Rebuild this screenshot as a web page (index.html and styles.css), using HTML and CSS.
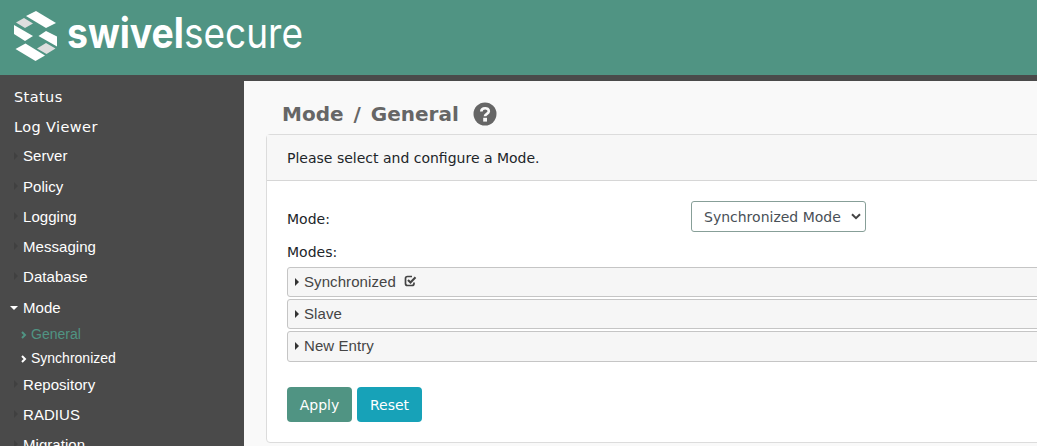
FILE: index.html
```html
<!DOCTYPE html>
<html lang="en">
<head>
<meta charset="utf-8">
<title>Swivel Secure - Mode / General</title>
<link rel="stylesheet" href="styles.css">
</head>
<body>
<header class="topbar">
  <svg class="logo" width="310" height="75" viewBox="0 0 310 75" role="img" aria-label="swivelsecure">
    <g fill="#fff">
      <path d="M36 11 56 23 46 28 26 16Z"/>
      <path d="M14 25 33 36 25 41 14 34Z"/>
      <path d="M46 31 57 36.5V46.5L38.500 36Z"/>
      <path d="M25.500 43.500 45 55.500 35.500 61 15.500 49Z"/>
    </g>
    <path fill="#dedede" d="M24 18 33 23.500 25 28 16 22.500Z M46 43 55.500 48.500 46.500 54 37 48.500Z"/>
    <text class="logo-bold" x="67" y="47.500" textLength="117" lengthAdjust="spacingAndGlyphs">swivel</text>
    <text class="logo-light" x="184" y="47.500" textLength="119" lengthAdjust="spacingAndGlyphs">secure</text>
  </svg>
</header>
<div class="layout">
  <nav class="sidebar">
    <a class="item top">Status</a>
    <a class="item top">Log Viewer</a>
    <a class="item first"><i class="caret"></i>Server</a>
    <a class="item"><i class="caret"></i>Policy</a>
    <a class="item"><i class="caret"></i>Logging</a>
    <a class="item"><i class="caret"></i>Messaging</a>
    <a class="item"><i class="caret"></i>Database</a>
    <a class="item mode"><i class="caret open"></i>Mode</a>
    <a class="sub active"><svg class="chev" viewBox="0 0 6 8"><path d="M1 1 4 4 1 7"/></svg>General</a>
    <a class="sub"><svg class="chev" viewBox="0 0 6 8"><path d="M1 1 4 4 1 7"/></svg>Synchronized</a>
    <a class="item after"><i class="caret"></i>Repository</a>
    <a class="item"><i class="caret"></i>RADIUS</a>
    <a class="item"><i class="caret"></i>Migration</a>
  </nav>
  <main class="content">
    <h1 class="title"><span>Mode / General</span>
      <svg class="help" viewBox="0 0 24 24"><circle cx="12" cy="12" r="11.500" fill="#666"/><path d="M8.300 9.500C8.500 5.300 15.800 5.100 15.800 9.200 15.800 11.800 12 11.800 12 14.300" fill="none" stroke="#f9f9f9" stroke-width="2.700"/><path d="M10.200 15.800h3.800v3.800h-3.800z" fill="#f9f9f9"/></svg>
    </h1>
    <section class="card">
      <div class="card-head"><span>Please select and configure a Mode.</span></div>
      <div class="card-body">
        <div class="field">
          <label class="label">Mode:</label>
          <div class="select"><span>Synchronized Mode</span><svg class="down" viewBox="0 0 10 7"><path d="M1 1.200 5 5.200 9 1.200"/></svg></div>
        </div>
        <div class="label modes">Modes:</div>
        <div class="entry"><i class="tri"></i>Synchronized
          <svg class="check" viewBox="0 0 13 12"><path d="M8 1.500H3.500Q1.500 1.500 1.500 3.500V8.500Q1.500 10.500 3.500 10.500H8Q10 10.500 10 8.500V7.500" stroke-width="1.700"/><path d="M4 5 6.500 7.500 11.500 2.300" stroke-width="2.100"/></svg>
        </div>
        <div class="entry"><i class="tri"></i>Slave</div>
        <div class="entry last"><i class="tri"></i>New Entry</div>
        <div class="buttons"><button class="btn apply">Apply</button><button class="btn reset">Reset</button></div>
      </div>
    </section>
  </main>
</div>
</body>
</html>
```
FILE: styles.css
```css
* { box-sizing: border-box; }
body {
  margin: 0;
  height: 446px;
  overflow: hidden;
  background: #4a4a4a;
  font-family: Verdana, "DejaVu Sans", sans-serif;
  font-size: 14px;
  color: #212529;
}
.topbar { height: 75px; background: #509483; }
.logo { display: block; }
.logo text { font-family: Inter, sans-serif; font-size: 42px; fill: #fff; }
.logo .logo-bold { font-weight: 700; }
.logo .logo-light { font-weight: 400; }

.layout { display: flex; height: 371px; }
.sidebar { width: 244px; flex: none; padding: 7px 0 0 14px; overflow: hidden; }
.item, .sub {
  display: flex;
  align-items: center;
  color: #fff;
  font-family: Arial, "Liberation Sans", sans-serif;
}
.item { height: 30px; font-size: 15px; letter-spacing: 0.05px; }
.item.top { height: 30px; font-family: Verdana, "DejaVu Sans", sans-serif; font-size: 14.500px; letter-spacing: 0.400px; }
.item.first { height: 29px; padding-bottom: 2px; }
.sub { height: 24px; padding-left: 7px; font-size: 14px; }
.item.mode { height: 31px; padding-top: 2px; }
.item.after { height: 29px; padding-bottom: 1px; }
.sub.active { color: #509483; }
.caret {
  width: 4px;
  height: 8px;
  margin-right: 5px;
  border: 4px solid transparent;
  border-left-color: #404040;
  border-right: 0;
}
.caret.open {
  width: 8px;
  height: 4px;
  margin: 0 5px 0 -4px;
  border: 4px solid transparent;
  border-top-color: #fff;
  border-bottom: 0;
}
.chev { width: 6px; height: 8px; margin: 2px 4px 0 0; fill: none; stroke: currentColor; stroke-width: 2; }

.content {
  flex: none;
  width: 840px;
  margin-top: 6px;
  padding: 16px 22px 0;
  background: #f9f9f9;
}
.title {
  display: flex;
  align-items: center;
  gap: 14px;
  height: 34px;
  margin: 0 0 3px;
  padding-left: 16px;
  color: #666;
  font-size: 20px;
  font-weight: 700;
  letter-spacing: 0;
  word-spacing: 3px;
}
.help { width: 24px; height: 24px; }
.card { height: 309px; border: 1px solid #dcdcdc; border-radius: 4px; background: #fff; }
.card-head {
  display: flex;
  align-items: center;
  height: 46px;
  padding-left: 20px;
  border-bottom: 1px solid #d6d6d6;
  background: #f7f7f7;
}
.card-body { padding: 20px 20px 0; }
.field { display: flex; height: 31px; }
.label { width: 404px; padding-top: 9px; line-height: 18px; }
.select {
  display: flex;
  align-items: center;
  justify-content: space-between;
  width: 175px;
  height: 31px;
  padding: 0 4px 0 12px;
  border: 1px solid #879f98;
  border-radius: 3px;
  color: #495057;
}
.down { width: 10px; height: 7px; fill: none; stroke: #444; stroke-width: 2; }
.modes { height: 35px; padding-top: 11px; }
.entry {
  display: flex;
  align-items: center;
  height: 30px;
  margin-bottom: 2px;
  padding: 0 0 2px 7px;
  border: 1px solid #c5c5c5;
  border-radius: 3px;
  background: #f6f6f6;
  color: #454545;
  font-family: Arial, "Liberation Sans", sans-serif;
  font-size: 15px;
  letter-spacing: 0.080px;
}
.entry.last { height: 31px; }
.tri {
  height: 8px;
  margin: 1px 5px 0 0;
  border: 4px solid transparent;
  border-left-color: #333;
  border-right: 0;
}
.check { width: 13px; height: 12px; margin-left: 8px; fill: none; stroke: #444; }
.buttons { display: flex; gap: 5px; padding-top: 23px; }
.btn {
  width: 65px;
  height: 35px;
  padding: 0;
  border: 0;
  border-radius: 4px;
  color: #fff;
  font: 14px Verdana, "DejaVu Sans", sans-serif;
}
.apply { background: #509483; }
.reset { background: #17a2b8; }
```
